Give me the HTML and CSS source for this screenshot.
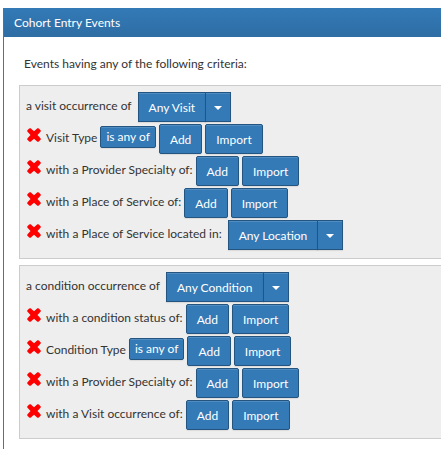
FILE: index.html
```html
<!DOCTYPE html>
<html lang="en">
<head>
<meta charset="utf-8">
<title>Cohort Entry Events</title>
<link rel="stylesheet" href="styles.css">
</head>
<body>
<svg width="0" height="0" class="sprite" aria-hidden="true">
  <symbol id="remove" viewBox="0 0 14 14">
    <path d="M3.6 0.3 7 3.3 10.4 0.3Q11.1 0 11.8 0.4L13.6 2.2Q14 2.9 13.7 3.6L10.5 7 13.7 10.4Q14 11.1 13.6 11.8L11.8 13.6Q11.1 14 10.4 13.7L7 10.7 3.6 13.7Q2.9 14 2.2 13.6L0.4 11.8Q0 11.1 0.3 10.4L3.5 7 0.3 3.6Q0 2.9 0.4 2.2L2.2 0.4Q2.9 0 3.6 0.3Z"/>
  </symbol>
</svg>
<main class="panel">
  <h1 class="panel-heading">Cohort Entry Events</h1>
  <div class="panel-body">
    <p class="intro">Events having any of the following criteria:</p>

    <section class="criteria">
      <div class="row">
        <span class="label">a visit occurrence of</span>
        <div class="split"><button class="btn">Any Visit</button><button class="btn toggle" aria-label="Choose visit"><span class="caret"></span></button></div>
      </div>
      <div class="row">
        <button class="remove" aria-label="Remove"><svg><use href="#remove"/></svg></button>
        <span class="label">Visit Type</span>
        <button class="btn small">is any of</button>
        <button class="btn">Add</button>
        <button class="btn">Import</button>
      </div>
      <div class="row">
        <button class="remove" aria-label="Remove"><svg><use href="#remove"/></svg></button>
        <span class="label">with a Provider Specialty of:</span>
        <button class="btn">Add</button>
        <button class="btn">Import</button>
      </div>
      <div class="row">
        <button class="remove" aria-label="Remove"><svg><use href="#remove"/></svg></button>
        <span class="label">with a Place of Service of:</span>
        <button class="btn">Add</button>
        <button class="btn">Import</button>
      </div>
      <div class="row">
        <button class="remove" aria-label="Remove"><svg><use href="#remove"/></svg></button>
        <span class="label">with a Place of Service located in:</span>
        <div class="split"><button class="btn">Any Location</button><button class="btn toggle" aria-label="Choose location"><span class="caret"></span></button></div>
      </div>
    </section>

    <section class="criteria">
      <div class="row">
        <span class="label">a condition occurrence of</span>
        <div class="split"><button class="btn">Any Condition</button><button class="btn toggle" aria-label="Choose condition"><span class="caret"></span></button></div>
      </div>
      <div class="row">
        <button class="remove" aria-label="Remove"><svg><use href="#remove"/></svg></button>
        <span class="label">with a condition status of:</span>
        <button class="btn">Add</button>
        <button class="btn">Import</button>
      </div>
      <div class="row">
        <button class="remove" aria-label="Remove"><svg><use href="#remove"/></svg></button>
        <span class="label">Condition Type</span>
        <button class="btn small">is any of</button>
        <button class="btn">Add</button>
        <button class="btn">Import</button>
      </div>
      <div class="row">
        <button class="remove" aria-label="Remove"><svg><use href="#remove"/></svg></button>
        <span class="label">with a Provider Specialty of:</span>
        <button class="btn">Add</button>
        <button class="btn">Import</button>
      </div>
      <div class="row">
        <button class="remove" aria-label="Remove"><svg><use href="#remove"/></svg></button>
        <span class="label">with a Visit occurrence of:</span>
        <button class="btn">Add</button>
        <button class="btn">Import</button>
      </div>
    </section>
  </div>
</main>
</body>
</html>
```
FILE: styles.css
```css
* { box-sizing: border-box; }

body {
  margin: 0;
  padding: 8px 0 0 3px;
  background: #fff;
  color: #333;
  font: 12px/18px Lato, "Noto Sans", sans-serif;
}

.sprite { position: absolute; }

.panel {
  min-height: calc(100vh - 8px);
  border-left: 1px solid #337ab7;
}

.panel-heading {
  margin: 0;
  padding: 6px 10px 5px;
  background: linear-gradient(#337ab7, #2e6da4);
  color: #fff;
  font-size: 12px;
  font-weight: 400;
  line-height: 18px;
}

.panel-body { padding: 18px 0 0 15px; }

.intro {
  margin: 0 0 12px;
  padding-left: 5px;
}

.criteria {
  margin-bottom: 6px;
  padding: 6px;
  border: 1px solid #ccc;
  border-right: 0;
  background: #eee;
}

.row {
  display: flex;
  align-items: center;
  gap: 3px;
  height: 30px;
  margin-bottom: 2px;
  white-space: nowrap;
}

.label { margin-bottom: 2px; }

.btn {
  height: 30px;
  padding: 1px 10px 0;
  border: 1px solid #245580;
  border-radius: 2px;
  background: #337ab7;
  box-shadow: inset 0 1px 0 rgba(255, 255, 255, 0.15), 0 1px 1px rgba(0, 0, 0, 0.08);
  color: #fff;
  font: inherit;
}

.small {
  height: 22px;
  margin-bottom: 4px;
  padding: 0 5px;
}

.split {
  display: flex;
  margin-left: 3px;
}

.split .btn { border-radius: 0; }

.split .toggle {
  margin-left: -1px;
  padding: 2px 8px 0;
}

.caret {
  display: block;
  border-top: 4px solid #fff;
  border-right: 4px solid transparent;
  border-left: 4px solid transparent;
}

.remove {
  width: 17px;
  height: 14px;
  margin-bottom: 8px;
  padding: 0 0 0 1px;
  border: 0;
  background: none;
}

.remove svg {
  display: block;
  width: 14px;
  height: 14px;
  fill: #f00;
}
```
